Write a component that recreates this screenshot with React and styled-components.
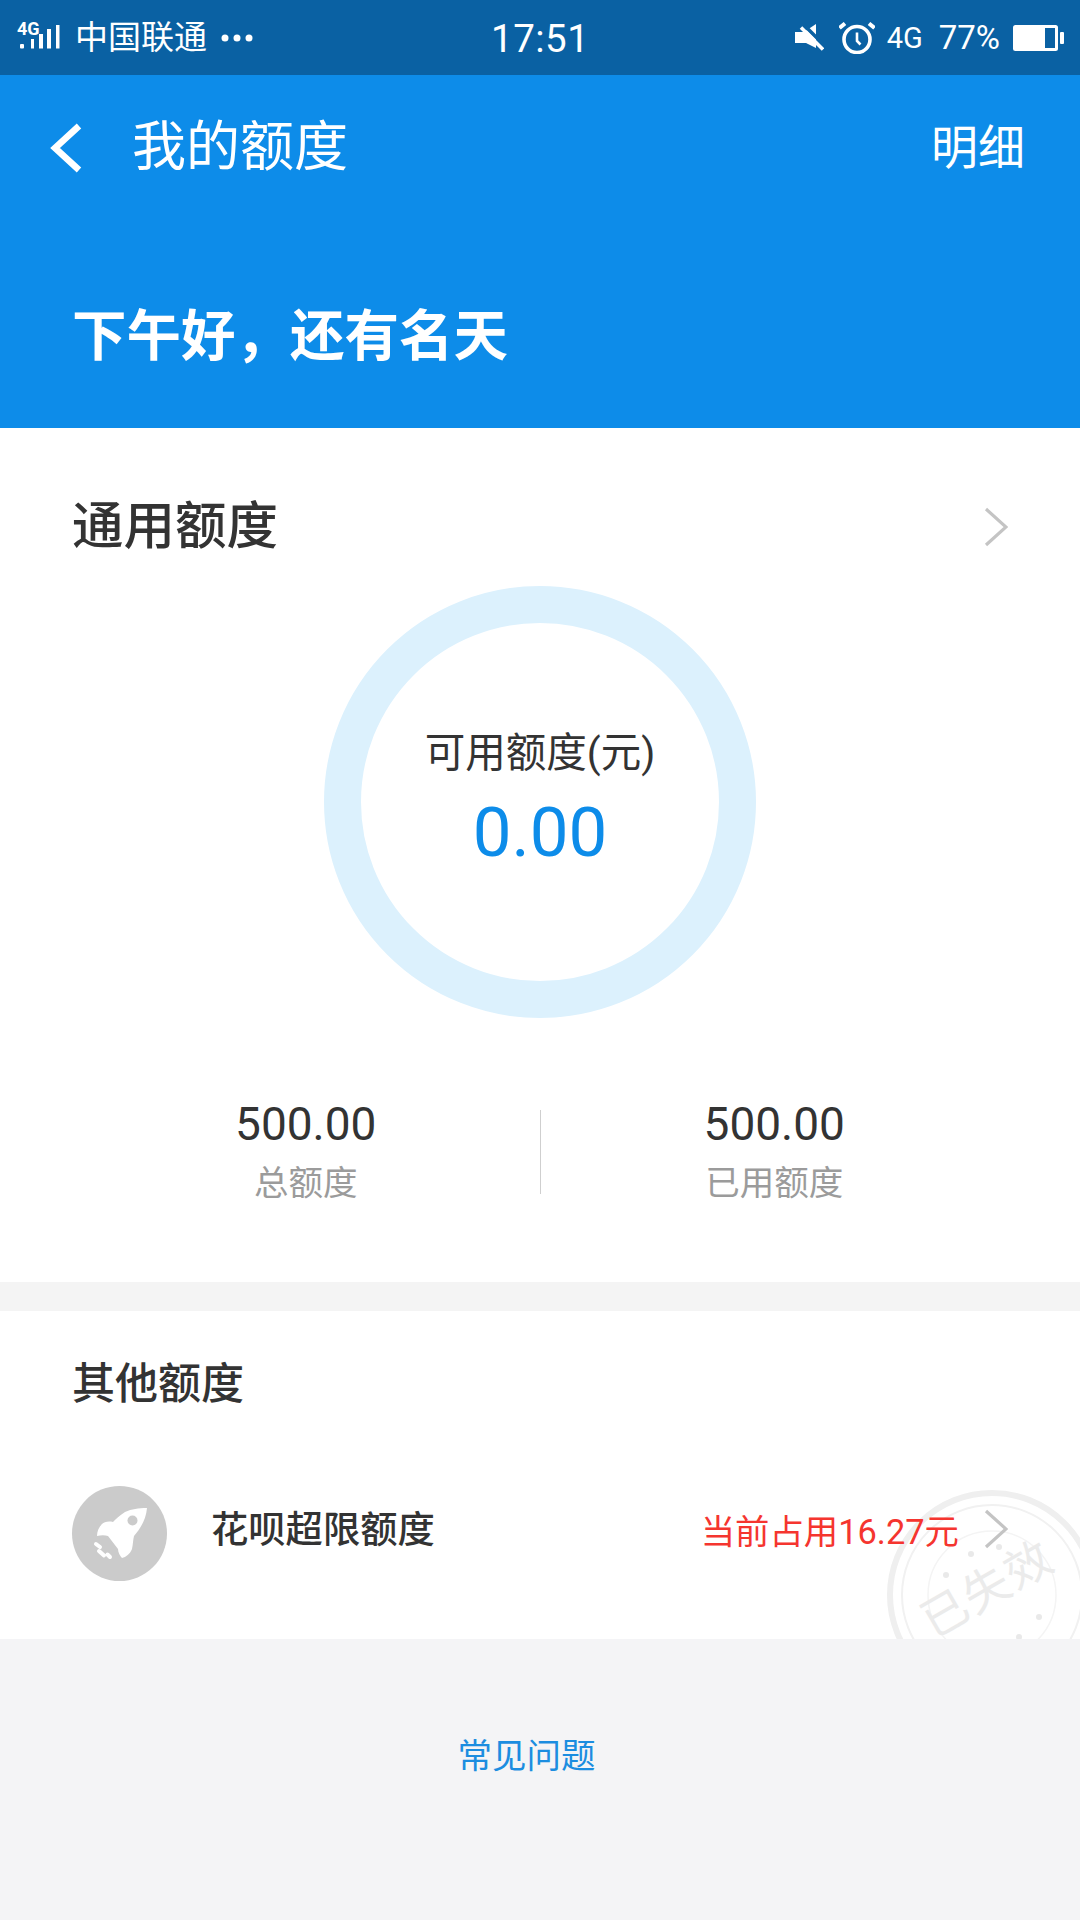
import React from 'react'
import styled, { createGlobalStyle } from 'styled-components'

const Global = createGlobalStyle`
  html, body {
    margin: 0;
    padding: 0;
    background: #f4f4f6;
  }
  * {
    box-sizing: border-box;
  }
`

const Page = styled.div`
  width: 1080px;
  height: 1920px;
  overflow: hidden;
  display: flex;
  flex-direction: column;
  background: #f4f4f6;
  font-family: Roboto, 'Noto Sans CJK SC', sans-serif;
  color: #333;
`

const StatusBar = styled.div`
  height: 75px;
  flex: none;
  display: flex;
  align-items: center;
  justify-content: space-between;
  padding: 0 15px 0 16px;
  background: #0a61a3;
  color: #fff;
  position: relative;
`

const StatusSide = styled.div`
  display: flex;
  align-items: center;
  gap: ${(props) => props.gap || 0}px;
`

const Carrier = styled.span`
  font-size: 33px;
  line-height: 40px;
  margin-left: 15px;
`

const Clock = styled.span`
  position: absolute;
  left: 491px;
  top: 16px;
  font-size: 38.5px;
  line-height: 46px;
  letter-spacing: 0.5px;
`

const NetLabel = styled.span`
  font-size: 29px;
  margin-left: -1px;
  margin-right: 3px;
`

const Percent = styled.span`
  font-size: 33px;
`

const Header = styled.header`
  height: 353px;
  flex: none;
  background: #0d8ce9;
  color: #fff;
`

const NavRow = styled.div`
  height: 146px;
  display: flex;
  align-items: center;
  padding: 0 55px 0 49px;
`

const NavTitle = styled.h1`
  flex: 1;
  margin: 0 0 0 49px;
  font-size: 54px;
  font-weight: 400;
  line-height: 64px;
`

const NavAction = styled.span`
  font-size: 47px;
  line-height: 60px;
`

const Greeting = styled.div`
  margin: 82px 0 0 72px;
  font-size: 54.5px;
  line-height: 66px;
  font-weight: 700;
`

const Card = styled.section`
  background: #fff;
  flex: none;
  position: relative;
  overflow: hidden;
`

const QuotaCard = styled(Card)`
  height: 883px;
  border-bottom: 29px solid #f4f4f4;
  padding-top: 64px;
`

const SectionHead = styled.div`
  display: flex;
  align-items: center;
  justify-content: space-between;
  padding: 0 72px 0 72px;
`

const BigTitle = styled.h2`
  margin: 0;
  font-size: 51.5px;
  line-height: 70px;
  font-weight: 500;
  color: #333;
`

const Ring = styled.div`
  width: 432px;
  height: 432px;
  margin: 24px auto 0;
  border-radius: 50%;
  border: 37px solid #dcf1fd;
  display: flex;
  flex-direction: column;
  align-items: center;
  justify-content: center;
`

const RingLabel = styled.div`
  font-size: 40.5px;
  line-height: 50px;
  margin-top: -2px;
`

const RingValue = styled.div`
  font-size: 69px;
  line-height: 84px;
  margin-top: 13px;
  color: #0d8ce9;
`

const Totals = styled.div`
  display: grid;
  grid-template-columns: 1fr 1px 1fr;
  align-items: center;
  margin-top: 79px;
  padding: 0 72px 0 72px;
`

const Total = styled.div`
  text-align: center;
`

const TotalDivider = styled.div`
  width: 1px;
  height: 84px;
  margin-top: -1px;
  background: #cfcfcf;
`

const TotalValue = styled.div`
  font-size: 46px;
  line-height: 54px;
  color: #333;
`

const TotalLabel = styled.div`
  font-size: 34.5px;
  line-height: 50px;
  margin-top: 7px;
  color: #9b9b9b;
`

const OtherCard = styled(Card)`
  height: 328px;
  padding: 43px 0 0 72px;
`

const OtherTitle = styled.h3`
  margin: 0;
  font-size: 43px;
  line-height: 60px;
  font-weight: 500;
`

const OtherRow = styled.div`
  position: relative;
  display: flex;
  align-items: center;
  margin-top: 72px;
  padding-right: 72px;
`

const RocketBadge = styled.div`
  width: 95px;
  height: 95px;
  border-radius: 50%;
  background: #cbcbcb;
  display: flex;
  align-items: center;
  justify-content: center;
`

const RowName = styled.div`
  flex: 1;
  margin-left: 44px;
  font-size: 37.3px;
  line-height: 48px;
  font-weight: 500;
  margin-top: -8px;
`

const RowValue = styled.div`
  font-size: 34.4px;
  line-height: 48px;
  color: #f5352f;
  margin-right: 25px;
  margin-top: -4px;
`

const RowChevron = styled.div`
  display: flex;
  margin-top: -9px;
`

const Stamp = styled.svg`
  position: absolute;
  left: 884px;
  top: 176px;
  pointer-events: none;
`

const FaqLink = styled.div`
  margin: 92px 0 0 -27px;
  text-align: center;
  font-size: 34.5px;
  line-height: 50px;
  color: #1c8de0;
`

function Signal() {
  return (
    <svg width="44" height="34" viewBox="0 0 44 34" fill="#fff" overflow="visible">
      <text x="1" y="14" fontSize="18" fontWeight="700" fontFamily="Roboto, sans-serif">4G</text>
      <rect x="4" y="23" width="4" height="4.5" rx="1" />
      <rect x="15" y="18" width="3" height="9.5" />
      <rect x="23" y="13" width="4" height="14.5" />
      <rect x="31" y="8" width="4" height="19.5" />
      <rect x="40" y="4" width="3.5" height="23.5" />
    </svg>
  )
}

function Dots() {
  return (
    <svg width="32" height="8" viewBox="0 0 32 8" fill="#fff" style={{ marginLeft: 14 }}>
      <circle cx="4" cy="4" r="3.5" />
      <circle cx="16" cy="4" r="3.5" />
      <circle cx="28" cy="4" r="3.5" />
    </svg>
  )
}

function Mute() {
  return (
    <svg width="30" height="32" viewBox="0 0 30 32" fill="none" style={{ marginRight: 2 }}>
      <path d="M1 10h9l12-8v24l-10-5H1z" fill="#fff" />
      <path d="M10 3l20 20" stroke="#0a61a3" strokeWidth="3.5" />
      <path d="M7 5.500l22 22" stroke="#fff" strokeWidth="3.5" />
    </svg>
  )
}

function Alarm() {
  return (
    <svg width="36" height="32" viewBox="0 0 36 32" fill="none" stroke="#fff">
      <circle cx="18" cy="17.5" r="13" strokeWidth="3.6" />
      <path d="M18 10.5v8.5l3.5 3.5" strokeWidth="2.6" />
      <path d="M.5 6L6 1.5M35.5 6L30 1.5" strokeWidth="4" />
    </svg>
  )
}

function Battery() {
  return (
    <svg width="52" height="28" viewBox="0 0 52 28">
      <rect x="0" y="1" width="45" height="26" rx="2.5" fill="#fff" />
      <rect x="32" y="4" width="10" height="20" fill="#0a61a3" />
      <rect x="47" y="8" width="4" height="12" rx="1" fill="#fff" />
    </svg>
  )
}

function BackArrow() {
  return (
    <svg width="34" height="50" viewBox="0 0 34 50" fill="none">
      <path d="M30 3L6 25l24 22" stroke="#fff" strokeWidth="6.5" />
    </svg>
  )
}

function Chevron() {
  return (
    <svg width="24" height="40" viewBox="0 0 24 40" fill="none">
      <path d="M2 2l20 18L2 38" stroke="#c4c4c4" strokeWidth="3.2" />
    </svg>
  )
}

function Rocket() {
  return (
    <svg width="95" height="95" viewBox="0 0 95 95" fill="#fff">
      <path d="M75 22C66 22 60 23 53 26C48 29 44 33 41 36C36 35 32 36 30 38C27 41 25 45 25 50C29 49 33 49 36 50L46 63C46 66 48 70 50 72C54 71 58 68 60 63C61 58 61 54 62 50C68 43 74 34 75 22Z" />
      <circle cx="60.5" cy="34.5" r="5" fill="#cbcbcb" />
      <path d="M24 58l4 3M27 65l5 4.500M35.500 68.500l2.500 2.500" stroke="#fff" strokeWidth="4" strokeLinecap="round" fill="none" />
    </svg>
  )
}

// watermark in the corner of the row, clipped by the card's bottom edge
function ExpiredStamp() {
  const stars = [[87, 67], [62, 88], [115, 60], [155, 130], [135, 150]]
  return (
    <Stamp width="216" height="216" viewBox="0 0 216 216" fill="none">
      <circle cx="108" cy="108" r="102" stroke="#efefef" strokeWidth="6" />
      <circle cx="108" cy="108" r="90" stroke="#f1f1f1" strokeWidth="2" />
      <circle cx="108" cy="108" r="64" stroke="#f4f4f4" strokeWidth="1.5" />
      {stars.map(([x, y]) => (
        <circle key={x} cx={x} cy={y} r="3" fill="#e9e9e9" />
      ))}
      <text
        x="103"
        y="118"
        fontSize="46"
        letterSpacing="2"
        fill="#ebebeb"
        textAnchor="middle"
        transform="rotate(-30 103 101)"
        fontFamily="'Noto Sans CJK SC', sans-serif"
      >
        已失效
      </text>
    </Stamp>
  )
}

export default function App() {
  return (
    <Page>
      <Global />
      <StatusBar>
        <StatusSide>
          <Signal />
          <Carrier>中国联通</Carrier>
          <Dots />
        </StatusSide>
        <Clock>17:51</Clock>
        <StatusSide gap={13}>
          <Mute />
          <Alarm />
          <NetLabel>4G</NetLabel>
          <Percent>77%</Percent>
          <Battery />
        </StatusSide>
      </StatusBar>

      <Header>
        <NavRow>
          <BackArrow />
          <NavTitle>我的额度</NavTitle>
          <NavAction>明细</NavAction>
        </NavRow>
        <Greeting>下午好，还有名天</Greeting>
      </Header>

      <QuotaCard>
        <SectionHead>
          <BigTitle>通用额度</BigTitle>
          <Chevron />
        </SectionHead>
        <Ring>
          <RingLabel>可用额度(元)</RingLabel>
          <RingValue>0.00</RingValue>
        </Ring>
        <Totals>
          <Total>
            <TotalValue>500.00</TotalValue>
            <TotalLabel>总额度</TotalLabel>
          </Total>
          <TotalDivider />
          <Total>
            <TotalValue>500.00</TotalValue>
            <TotalLabel>已用额度</TotalLabel>
          </Total>
        </Totals>
      </QuotaCard>

      <OtherCard>
        <ExpiredStamp />
        <OtherTitle>其他额度</OtherTitle>
        <OtherRow>
          <RocketBadge>
            <Rocket />
          </RocketBadge>
          <RowName>花呗超限额度</RowName>
          <RowValue>当前占用16.27元</RowValue>
          <RowChevron>
            <Chevron />
          </RowChevron>
        </OtherRow>
      </OtherCard>

      <FaqLink>常见问题</FaqLink>
    </Page>
  )
}
